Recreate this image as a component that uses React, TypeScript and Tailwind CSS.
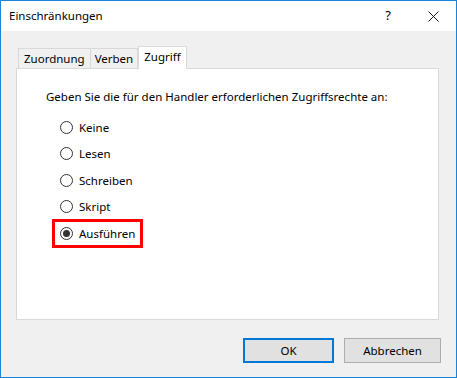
const options = ["Keine", "Lesen", "Schreiben", "Skript", "Ausführen"];

const Radio = ({ checked }: { checked?: boolean }) => (
  <span className="flex h-[13px] w-[13px] items-center justify-center rounded-full border border-[#333333] bg-white">
    {checked && <span className="h-[7px] w-[7px] rounded-full bg-[#333333]" />}
  </span>
);

export default function App() {
  const selected = "Ausführen";
  return (
    <div
      className="flex h-[378px] w-[457px] flex-col border border-[#1883d7] bg-[#f0f0f0] text-[11.5px] text-black"
      style={{ fontFamily: '"Noto Sans", "Segoe UI", sans-serif' }}
    >
      {/* Title bar */}
      <div className="flex h-[30px] items-center bg-white pl-[8px]">
        <span className="flex-1 text-[11.5px]">Einschränkungen</span>
        <span className="mr-[35px] w-[10px] text-center text-[13px]">?</span>
        <span className="mr-[17px] flex items-center">
          <svg width="11" height="11" viewBox="0 0 11 11">
            <path d="M0.5 0.5 L10.5 10.5 M10.5 0.5 L0.5 10.5" stroke="#111" strokeWidth="1" />
          </svg>
        </span>
      </div>

      {/* Tabs */}
      <div className="ml-[17px] mt-[15px] flex items-end">
        <div className="flex h-[20px] items-center border border-b-0 border-[#d9d9d9] px-[5px]">Zuordnung</div>
        <div className="flex h-[20px] items-center border border-b-0 border-l-0 border-[#d9d9d9] px-[4px]">Verben</div>
        <div className="relative z-10 -mb-px flex h-[23px] items-start border border-b-0 border-[#d9d9d9] bg-white px-[5px] pt-[1px]">
          Zugriff
        </div>
      </div>

      {/* Panel */}
      <div className="ml-[15px] h-[252px] w-[423px] border border-[#d9d9d9] bg-white pl-[29px] pt-[20px]">
        <div className="leading-[16px]">Geben Sie die für den Handler erforderlichen Zugriffsrechte an:</div>
        <div className="mt-[9px] flex flex-col">
          {options.map((o) => (
            <div key={o} className="flex h-[26.5px] items-center">
              {o === selected ? (
                <div className="ml-[6px] flex h-[29px] items-center gap-[6px] border-[3px] border-[#ff0000] pl-[5px] pr-[5px]">
                  <Radio checked />
                  <span>{o}</span>
                </div>
              ) : (
                <div className="ml-[14px] flex items-center gap-[6px]">
                  <Radio />
                  <span>{o}</span>
                </div>
              )}
            </div>
          ))}
        </div>
      </div>

      {/* Buttons */}
      <div className="mr-[15px] mt-[18px] flex justify-end gap-[10px]">
        <button className="flex h-[25px] w-[91px] items-center justify-center border-2 border-[#0078d7] bg-[#e1e1e1]">OK</button>
        <button className="flex h-[25px] w-[97px] items-center justify-center border border-[#adadad] bg-[#e1e1e1]">Abbrechen</button>
      </div>
    </div>
  );
}
